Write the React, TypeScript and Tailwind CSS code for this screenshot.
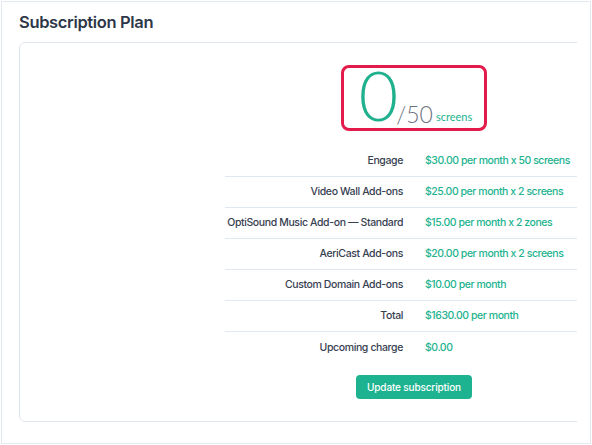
const rows: { label: string; value: string }[] = [
  { label: 'Engage', value: '$30.00 per month x 50 screens' },
  { label: 'Video Wall Add-ons', value: '$25.00 per month x 2 screens' },
  { label: 'OptiSound Music Add-on — Standard', value: '$15.00 per month x 2 zones' },
  { label: 'AeriCast Add-ons', value: '$20.00 per month x 2 screens' },
  { label: 'Custom Domain Add-ons', value: '$10.00 per month' },
  { label: 'Total', value: '$1630.00 per month' },
  { label: 'Upcoming charge', value: '$0.00' },
]

export default function App() {
  return (
    <div className="w-[592px] h-[445px] bg-white p-px font-['Inter','Liberation_Sans',sans-serif]">
      <div className="w-[590px] h-[443px] border border-[#e3e9f1] pl-[17px] pr-[13px] pt-[9px] flex flex-col">
        <h2 className="text-[16.5px] leading-[23px] font-semibold text-[#2d3748] tracking-[-0.35px]">Subscription Plan</h2>
        <div className="mt-[8px] overflow-hidden">
          <div className="w-[790px] border border-[#dfe6ef] rounded-md pt-[22px] pb-[22px] flex flex-col items-center">
            <div className="w-[146px] h-[66px] border-[3px] border-[#e21b4b] rounded-[8px] flex items-end justify-center pb-[2px] pl-[3px] font-['Lato',sans-serif]">
              <span className="text-[68px] leading-[62px] font-light text-[#1fb08d]">0</span>
              <span className="text-[23px] leading-[24px] font-light text-[#6b7280] -ml-[2px]">/50</span>
              <span className="text-[11px] leading-[18px] text-[#22b38f] ml-[3px]">screens</span>
            </div>
            <div className="mt-[15px] w-[378px] flex flex-col">
              {rows.map((r, i) => (
                <div
                  key={r.label}
                  className={`flex h-[31px] items-center text-[10.5px] font-medium tracking-[-0.38px] ${i < rows.length - 1 ? 'border-b border-[#e2e8f0]' : ''}`}
                >
                  <div className="w-1/2 text-right pr-[11px] text-[#374151] whitespace-nowrap">{r.label}</div>
                  <div className="w-1/2 pl-[11px] text-[#22b38f] whitespace-nowrap tracking-[-0.45px]">{r.value}</div>
                </div>
              ))}
            </div>
            <button className="mt-[12px] h-[24px] px-[11px] rounded bg-[#1eb390] text-white text-[10px] tracking-[-0.15px] font-medium">
              Update subscription
            </button>
          </div>
        </div>
      </div>
    </div>
  )
}
